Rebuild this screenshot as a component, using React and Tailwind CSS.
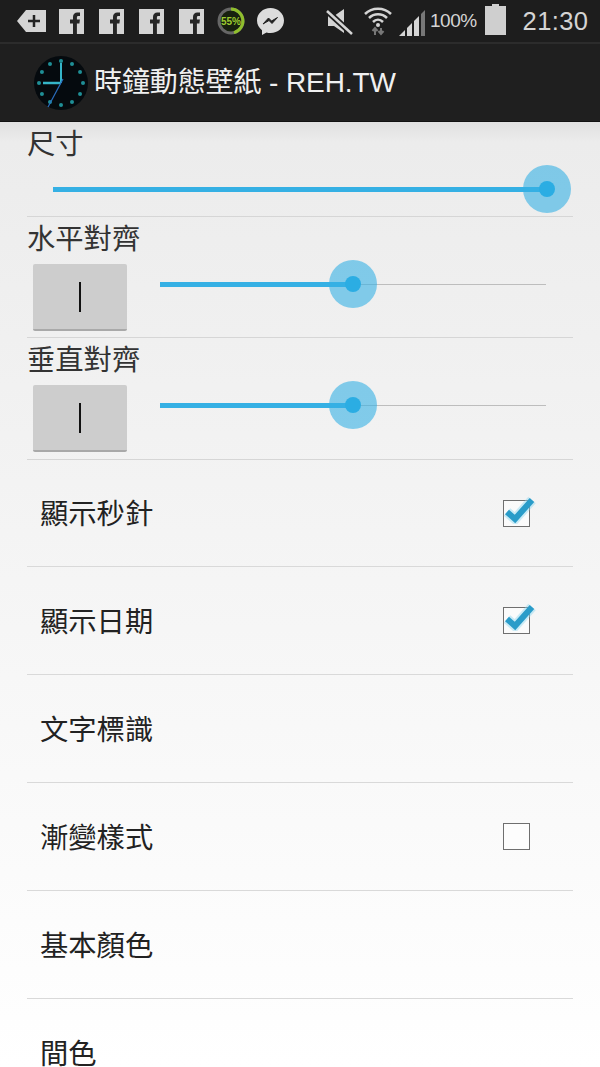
import React from "react";

const FONT = '"Liberation Sans","Noto Sans CJK TC",sans-serif';

function Fb() {
  return (
    <svg width="25" height="25" viewBox="0 0 25 25" className="shrink-0">
      <rect width="25" height="25" fill="#d4d4d4" />
      <path d="M14 25V14.5h-3V10.5h3V8c0-3 1.800-4.600 4.400-4.600H21v3.700h-1.600c-1.200 0-1.500.6-1.500 1.500v1.900h3l-.5 4h-2.500V25z" fill="#262626" />
    </svg>
  );
}

function Slider({ pct }) {
  return (
    <div className="relative h-12 flex-1">
      <div className="absolute top-[23.5px] left-0 right-0 h-px bg-[#bdbdbd]" />
      <div className="absolute top-[21.5px] left-0 h-[5px] bg-[#35b0e4]" style={{ width: `${pct}%` }} />
      <div className="absolute top-0 w-12 h-12 -ml-6 rounded-full bg-[#35b0e4]/60 flex items-center justify-center" style={{ left: `${pct}%` }}>
        <div className="w-4 h-4 rounded-full bg-[#2badE3]" />
      </div>
    </div>
  );
}

function AlignRow({ label, height }) {
  return (
    <div className={`border-b border-[#d6d6d6] flex flex-col ${height}`}>
      <div className="text-[28.3px] leading-[33px] text-[#333] pt-[6px] h-[47px]">{label}</div>
      <div className="flex items-start pl-[6px] pr-[27px]">
        <div className="w-[94px] h-[67px] bg-[#cdcdcd] rounded-[2px] border-b-2 border-[#a9a9a9] flex items-center justify-center shrink-0">
          <div className="w-[2.5px] h-[30px] bg-[#111]" />
        </div>
        <div className="ml-[33px] flex-1 flex -mt-[4px]">
          <Slider pct={50} />
        </div>
      </div>
    </div>
  );
}

function Check({ checked }) {
  return (
    <div className="relative w-[27px] h-[27px] border border-[#6f6f6f] bg-white/60">
      {checked && (
        <svg className="absolute -top-[7px] -left-[1px]" width="34" height="30" viewBox="0 0 34 30">
          <path d="M4 18l8 7L29 6" fill="none" stroke="#8fd6f0" strokeWidth="10" opacity="0.45" />
          <path d="M4 18l8 7L29 6" fill="none" stroke="#2a9cc9" strokeWidth="6" />
        </svg>
      )}
    </div>
  );
}

function Row({ label, check, last, height }) {
  return (
    <div className={`flex items-center justify-between pl-[13px] pr-[43px] ${height} ${last ? "" : "border-b border-[#d9d9d9]"}`}>
      <span className="text-[28.3px] leading-[40px] text-[#222] pt-[2px]">{label}</span>
      {check !== undefined && <Check checked={check} />}
    </div>
  );
}

export default function App() {
  return (
    <div className="w-[600px] h-[1067px] overflow-hidden flex flex-col bg-white" style={{ fontFamily: FONT }}>
      <div className="h-[42px] shrink-0 bg-[#1d1d1d] flex items-center border-b-2 border-[#2c2c2c] box-content">
        <div className="flex items-center pl-[17px] w-[300px] h-[40px]">
          <svg width="29" height="22" viewBox="0 0 29 22" className="shrink-0">
            <path d="M9 0h20v22H9L0 11z" fill="#d4d4d4" />
            <path d="M11 11h12M17 5v12" stroke="#222" strokeWidth="2.500" />
          </svg>
          <div className="flex gap-[15px] ml-[13px]">
            <Fb /><Fb /><Fb /><Fb />
          </div>
          <svg width="28" height="28" viewBox="0 0 28 28" className="ml-[13px] shrink-0">
            <circle cx="14" cy="14" r="12" fill="#17210f" stroke="#666" strokeWidth="3" />
            <path d="M14 2a12 12 0 0 1 3 23.600" fill="none" stroke="#8fbe2c" strokeWidth="3" />
            <text x="14" y="18" textAnchor="middle" fontSize="10" fontWeight="700" fill="#9ccc30" fontFamily="Liberation Sans">55%</text>
          </svg>
          <svg width="29" height="29" viewBox="0 0 29 29" className="ml-[11px] shrink-0">
            <path d="M14.500 1C7 1 1 6.500 1 13.500c0 4 2 7.400 5 9.700V28l4.500-2.500c1.300.4 2.600.5 4 .5C22 26 28 20.500 28 13.500S22 1 14.500 1z" fill="#dcdcdc" />
            <path d="M7 17l5.500-6 3 3 6-3.500-5.500 6-3-3z" fill="#222" stroke="#222" />
          </svg>
        </div>
        <div className="flex items-center w-[300px] h-[40px]">
          <svg width="28" height="28" viewBox="0 0 28 28" className="ml-[26px] shrink-0">
            <path d="M1 9h6l10-7v24L7 19H1z" fill="#d4d4d4" transform="translate(1 0)" />
            <path d="M1 4l25 23" stroke="#1d1d1d" strokeWidth="6" />
            <path d="M1 4l25 23" stroke="#d4d4d4" strokeWidth="2.500" />
          </svg>
          <svg width="30" height="30" viewBox="0 0 30 30" className="ml-[9px] shrink-0">
            <path d="M2 8c7-7 19-7 26 0M6 12c5-5 13-5 18 0M10 16c3-3 7-3 10 0" fill="none" stroke="#d4d4d4" strokeWidth="2.500" />
            <circle cx="15" cy="19" r="2" fill="#d4d4d4" />
            <path d="M12 29v-6M9.500 25l2.500-3 2.500 3M18 22v6M15.500 25l2.500 3 2.500-3" stroke="#777" strokeWidth="2" fill="none" />
          </svg>
          <svg width="26" height="26" viewBox="0 0 26 26" className="ml-[6px] mt-[3px] shrink-0">
            <path d="M0 26L6 20V26z" fill="#d4d4d4" />
            <path d="M8 18l5-5v13H8z" fill="#d4d4d4" />
            <path d="M15 11l5-5v20h-5z" fill="#d4d4d4" />
            <path d="M22 4l4-4v26h-4z" fill="#777" />
          </svg>
          <span className="ml-[5px] text-[19px] text-[#d4d4d4] tracking-[-0.5px]">100%</span>
          <svg width="21" height="31" viewBox="0 0 21 31" className="ml-[8px] -mt-[3px] shrink-0">
            <path d="M7 0h7v2h7v29H0V2h7z" fill="#cfcfcf" />
          </svg>
          <span className="ml-[17px] text-[25.5px] text-[#d4d4d4] tracking-[0.4px]">21:30</span>
        </div>
      </div>

      <div className="h-[78px] shrink-0 bg-[#1f1f1f] flex items-center pl-[33px] border-b border-[#111]">
        <svg width="56" height="56" viewBox="0 0 56 56" className="shrink-0">
          <circle cx="28" cy="28" r="27" fill="#050a0e" />
          {[...Array(12)].map((_, i) => {
            const a = (i * Math.PI) / 6;
            return <circle key={i} cx={28 + 22 * Math.sin(a)} cy={28 - 22 * Math.cos(a)} r="2" fill="#1f8f96" />;
          })}
          <path d="M28 28V8" stroke="#35b5c8" strokeWidth="2" />
          <path d="M28 28H10" stroke="#35b5c8" strokeWidth="2.500" />
          <path d="M30 24L15 52" stroke="#2b6fc0" strokeWidth="1.200" />
        </svg>
        <span className="ml-[5px] text-[28px] text-[#f0f0f0] tracking-[-0.1px]">時鐘動態壁紙 - REH.TW</span>
      </div>

      <div className="flex-1 overflow-hidden bg-[linear-gradient(to_bottom,#e0e0e0_0px,#ececec_20px,#ffffff_100%)] px-[27px]">
        <div className="border-b border-[#d6d6d6] h-[95px]">
          <div className="text-[28.3px] leading-[33px] text-[#333] pt-[6px] h-[40px]">尺寸</div>
          <div className="flex pl-[26px] pr-[26px] mt-[3px]">
            <Slider pct={100} />
          </div>
        </div>
        <AlignRow label="水平對齊" height="h-[121px]" />
        <AlignRow label="垂直對齊" height="h-[122px]" />
        <Row label="顯示秒針" check={true} height="h-[107px]" />
        <Row label="顯示日期" check={true} height="h-[108px]" />
        <Row label="文字標識" height="h-[108px]" />
        <Row label="漸變樣式" check={false} height="h-[108px]" />
        <Row label="基本顏色" height="h-[108px]" />
        <Row label="間色" last height="h-[108px]" />
      </div>
    </div>
  );
}
